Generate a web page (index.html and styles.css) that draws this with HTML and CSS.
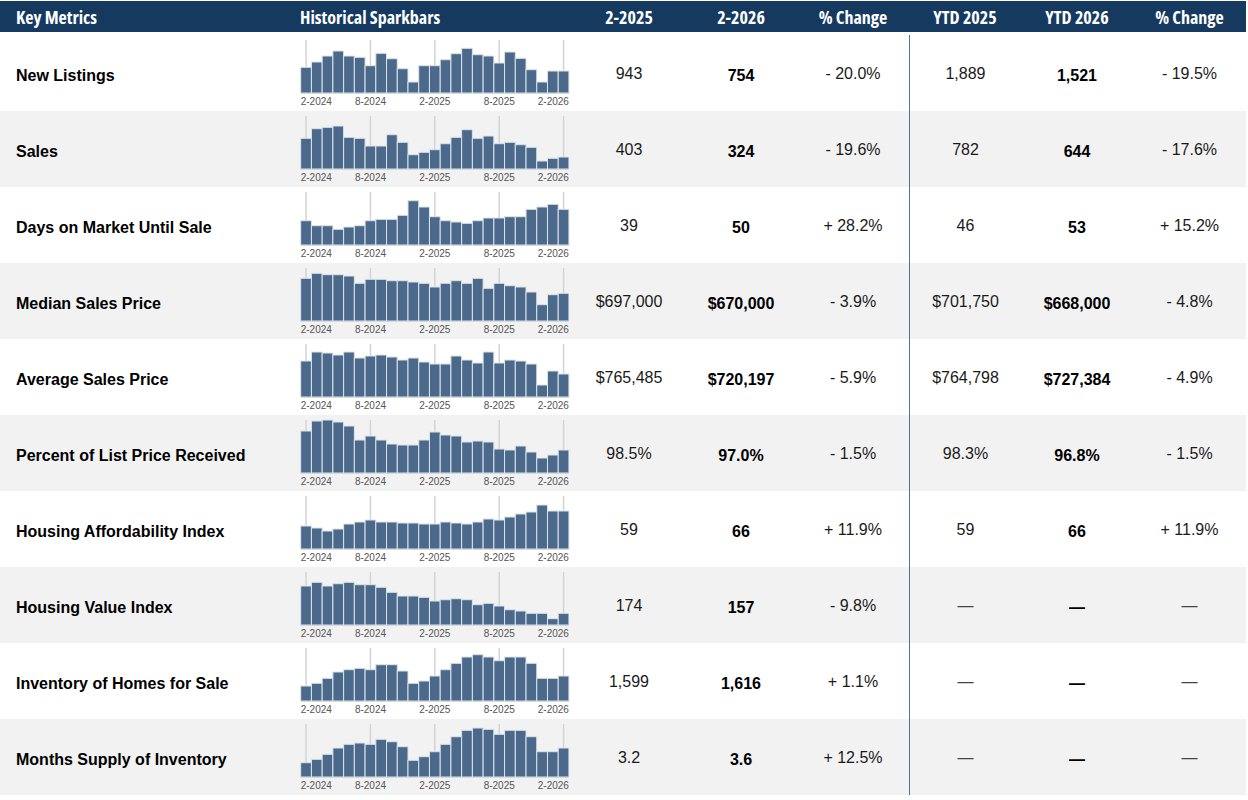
FILE: index.html
```html
<!DOCTYPE html>
<html lang="en">
<head>
<meta charset="utf-8">
<title>Key Metrics</title>
<link rel="stylesheet" href="styles.css">
</head>
<body>
<div class="table">
  <div class="head">
    <div class="h h-label"><span>Key Metrics</span></div>
    <div class="h h-spark"><span>Historical Sparkbars</span></div>
    <div class="h h-num"><span>2-2025</span></div>
    <div class="h h-num"><span>2-2026</span></div>
    <div class="h h-num"><span>% Change</span></div>
    <div class="h h-num"><span>YTD 2025</span></div>
    <div class="h h-num"><span>YTD 2026</span></div>
    <div class="h h-num"><span>% Change</span></div>
  </div>

  <div class="row">
    <div class="c label">New Listings</div>
    <div class="c spark" data-v="25.7,31,37,42,37,35.7,27.3,39.7,34.3,24.3,11,27.3,27.3,33.3,39.3,44.7,38.3,37,30,41,34.7,23.3,11,22,22"></div>
    <div class="c num">943</div>
    <div class="c num b">754</div>
    <div class="c num">- 20.0%</div>
    <div class="c num ytd">1,889</div>
    <div class="c num b">1,521</div>
    <div class="c num">- 19.5%</div>
  </div>

  <div class="row alt">
    <div class="c label">Sales</div>
    <div class="c spark" data-v="30.7,40.3,41.7,43,31.7,30.7,23,23,34.3,26.7,14.3,16.7,19.3,25.3,31.7,39.3,30.7,33,25.3,26.7,24.3,21.7,8,10.7,12"></div>
    <div class="c num">403</div>
    <div class="c num b">324</div>
    <div class="c num">- 19.6%</div>
    <div class="c num ytd">782</div>
    <div class="c num b">644</div>
    <div class="c num">- 17.6%</div>
  </div>

  <div class="row">
    <div class="c label">Days on Market Until Sale</div>
    <div class="c spark" data-v="24.3,19.3,19.3,15.7,18,19.3,24.3,25.7,25.7,29.7,44.3,38,28.3,24.3,23,21.7,24.3,27,27,28.3,28.3,35.7,38,40.7,35.7"></div>
    <div class="c num">39</div>
    <div class="c num b">50</div>
    <div class="c num">+ 28.2%</div>
    <div class="c num ytd">46</div>
    <div class="c num b">53</div>
    <div class="c num">+ 15.2%</div>
  </div>

  <div class="row alt">
    <div class="c label">Median Sales Price</div>
    <div class="c spark" data-v="42.7,47.7,46.3,46.3,45,37.7,41.7,41.7,40.3,40.3,39,37.7,34,37.7,40.3,37.7,42.7,32.7,37.7,35.3,34,29,16.3,26.3,27.7"></div>
    <div class="c num">$697,000</div>
    <div class="c num b">$670,000</div>
    <div class="c num">- 3.9%</div>
    <div class="c num ytd">$701,750</div>
    <div class="c num b">$668,000</div>
    <div class="c num">- 4.8%</div>
  </div>

  <div class="row">
    <div class="c label">Average Sales Price</div>
    <div class="c spark" data-v="36,45,44,42,45,39,41,42,40,37,39,35,33,33,41,37,34,45,34,37,36,33,12,26,23"></div>
    <div class="c num">$765,485</div>
    <div class="c num b">$720,197</div>
    <div class="c num">- 5.9%</div>
    <div class="c num ytd">$764,798</div>
    <div class="c num b">$727,384</div>
    <div class="c num">- 4.9%</div>
  </div>

  <div class="row alt">
    <div class="c label">Percent of List Price Received</div>
    <div class="c spark" data-v="42,52,53,51,47,33,37,33,29,28,28,33,41,38,37,31,32,31,24,23,27,21,15,18,23"></div>
    <div class="c num">98.5%</div>
    <div class="c num b">97.0%</div>
    <div class="c num">- 1.5%</div>
    <div class="c num ytd">98.3%</div>
    <div class="c num b">96.8%</div>
    <div class="c num">- 1.5%</div>
  </div>

  <div class="row">
    <div class="c label">Housing Affordability Index</div>
    <div class="c spark" data-v="23,21,18,20,25,27,29,27,27,26,26,25,25,27,26,25,27,30,29,32,35,37,44,38,38"></div>
    <div class="c num">59</div>
    <div class="c num b">66</div>
    <div class="c num">+ 11.9%</div>
    <div class="c num ytd">59</div>
    <div class="c num b">66</div>
    <div class="c num">+ 11.9%</div>
  </div>

  <div class="row alt">
    <div class="c label">Housing Value Index</div>
    <div class="c spark" data-v="39,42.7,39,41.3,42.7,40.3,40.3,37.7,32.7,29,29,27.7,24,25.3,26.3,25.3,20.3,21.7,19,15.3,14,11.7,11.7,6.3,11.7"></div>
    <div class="c num">174</div>
    <div class="c num b">157</div>
    <div class="c num">- 9.8%</div>
    <div class="c num ytd dash">&mdash;</div>
    <div class="c num b dash">&mdash;</div>
    <div class="c num dash">&mdash;</div>
  </div>

  <div class="row">
    <div class="c label">Inventory of Homes for Sale</div>
    <div class="c spark" data-v="15,17.7,22.7,29,31.3,32.7,31.3,36.3,36.3,30,17.7,20,25,31.3,37.7,44,46.3,44,40.3,44,44,37.7,22.7,22.7,25"></div>
    <div class="c num">1,599</div>
    <div class="c num b">1,616</div>
    <div class="c num">+ 1.1%</div>
    <div class="c num ytd dash">&mdash;</div>
    <div class="c num b dash">&mdash;</div>
    <div class="c num dash">&mdash;</div>
  </div>

  <div class="row alt">
    <div class="c label">Months Supply of Inventory</div>
    <div class="c spark" data-v="14.3,17.7,22.7,29,32.7,34,32.7,37.7,35.3,30.3,16.7,20.3,25.3,32.7,40.3,46.7,49,47.7,42.7,46.7,46.7,40.3,25.3,25.3,29"></div>
    <div class="c num">3.2</div>
    <div class="c num b">3.6</div>
    <div class="c num">+ 12.5%</div>
    <div class="c num ytd dash">&mdash;</div>
    <div class="c num b dash">&mdash;</div>
    <div class="c num dash">&mdash;</div>
  </div>
</div>
<script src="script.js"></script>
</body>
</html>
```

FILE: styles.css
```css
* { box-sizing: border-box; }

body {
  margin: 0;
  background: #ffffff;
  font-family: "Liberation Sans", Arial, sans-serif;
  color: #111111;
}

.table {
  margin: 1px 0 0 0;
  width: 1246px;
}

.head,
.row {
  display: grid;
  grid-template-columns: 300px 273px repeat(5, 112px) 113px;
}

.head {
  height: 31px;
  margin-bottom: 3px;
  background: #15395f;
  color: #ffffff;
  font-family: "Open Sans", "Liberation Sans", sans-serif;
  font-stretch: 75%;
  font-weight: bold;
  font-size: 18px;
  align-items: center;
}

.h { display: flex; align-items: center; }
.h-label { padding-left: 16px; }
.h-spark { padding-left: 0; }
.h-num { justify-content: center; }

.row {
  height: 76px;
  background: #ffffff;
}

.row.alt { background: #f2f2f2; }

.c {
  display: flex;
  align-items: center;
}

.label {
  padding: 6px 0 0 16px;
  font-weight: bold;
  font-size: 16px;
  color: #000000;
}

.spark { align-items: flex-start; }
.spark svg { display: block; }

.num {
  justify-content: center;
  font-size: 16px;
  color: #1a1a1a;
  padding-top: 2px;
}

.num.b {
  font-weight: bold;
  color: #000000;
  padding-top: 6px;
}

.ytd { border-left: 1px solid #4f74a0; }

.dash { color: #444444; }
.dash.b { color: #000000; }
```

FILE: script.js
```js
(function () {
  var W = 10.73, X0 = 0.7, BASE = 58, TOP = 5;
  var labels = { 0: "2-2024", 6: "8-2024", 12: "2-2025", 18: "8-2025", 24: "2-2026" };
  document.querySelectorAll(".spark").forEach(function (el) {
    var v = el.getAttribute("data-v").split(",").map(Number);
    var s = '<svg width="272" height="76" viewBox="0 0 272 76" xmlns="http://www.w3.org/2000/svg">';
    [0, 6, 12, 18, 24].forEach(function (i) {
      var x = X0 + (i + 0.5) * W;
      s += '<line x1="' + x.toFixed(2) + '" y1="' + TOP + '" x2="' + x.toFixed(2) + '" y2="' + (BASE + 1) + '" stroke="#d4d4d4" stroke-width="1.5"/>';
    });
    s += '<line x1="' + X0 + '" y1="' + (BASE + 0.5) + '" x2="' + (X0 + 25 * W).toFixed(2) + '" y2="' + (BASE + 0.5) + '" stroke="#cfcfcf" stroke-width="1"/>';
    v.forEach(function (h, i) {
      var x = X0 + i * W;
      s += '<rect x="' + x.toFixed(2) + '" y="' + (BASE - h).toFixed(2) + '" width="' + W + '" height="' + h.toFixed(2) + '" fill="#4b6a8b" stroke="#dde3ea" stroke-width="1"/>';
    });
    Object.keys(labels).forEach(function (k) {
      var i = +k, x, anchor;
      if (i === 0) { x = X0; anchor = "start"; }
      else if (i === 24) { x = X0 + 25 * W; anchor = "end"; }
      else { x = X0 + (i + 0.5) * W; anchor = "middle"; }
      s += '<text x="' + x.toFixed(2) + '" y="70" text-anchor="' + anchor + '" font-family="Liberation Sans, Arial, sans-serif" font-size="10" fill="#555555">' + labels[k] + '</text>';
    });
    s += '</svg>';
    el.innerHTML = s;
  });
})();
```
